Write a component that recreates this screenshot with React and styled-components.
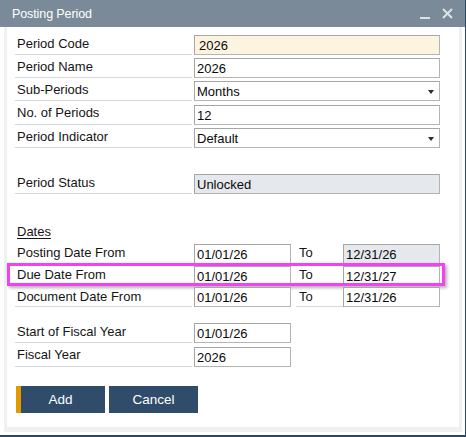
import React from "react";
import styled, { createGlobalStyle } from "styled-components";

const Global = createGlobalStyle`
  html, body { margin: 0; padding: 0; background: #ffffff; overflow: hidden; }
  * { box-sizing: border-box; }
`;

const Window = styled.div`
  width: 466px;
  height: 437px;
  background: #ffffff;
  border-right: 1px solid #2c4760;
  border-bottom: 2px solid #2c4760;
  display: flex;
  flex-direction: column;
  font-family: "Liberation Sans", Arial, sans-serif;
  position: relative;
`;

const TitleBar = styled.div`
  height: 27px;
  flex: none;
  background: #7b8a98;
  display: flex;
  align-items: center;
  justify-content: space-between;
  padding: 0 12px 0 12px;
`;

const Title = styled.div`
  color: #ffffff;
  font-size: 12.5px;
  letter-spacing: -0.1px;
`;

const TitleButtons = styled.div`
  display: flex;
  align-items: center;
  gap: 11px;
  margin-right: 0px;
`;

const Body = styled.div`
  flex: 1;
  display: flex;
  padding: 0 3px 3px 4px;
`;

const Panel = styled.div`
  flex: 1;
  border: 3px solid #f0f0f0;
  border-top: none;
  border-bottom-width: 5px;
  padding: 5px 0 0 8px;
  display: flex;
  flex-direction: column;
`;

const Row = styled.div`
  display: flex;
  height: ${(p) => p.$h}px;
  position: relative;
  flex: none;
`;

const Spacer = styled.div`
  height: ${(p) => p.$h}px;
  flex: none;
`;

const Label = styled.div`
  width: 177px;
  padding-left: 2px;
  border-bottom: ${(p) => (p.$plain ? "none" : "1px solid #d3d8dd")};
  display: flex;
  align-items: center;
  font-size: 13px;
  color: #141414;
  text-decoration: ${(p) => (p.$underline ? "underline" : "none")};
  text-underline-offset: 2px;
`;

const Field = styled.div`
  margin-left: ${(p) => (p.$flush ? 0 : 2)}px;
  align-self: flex-end;
  height: 20px;
  width: ${(p) => p.$w}px;
  border: 1px solid #b4b4b4;
  border-left-color: #a6a6a6;
  border-top-color: #a6a6a6;
  background: ${(p) => p.$bg || "#ffffff"};
  display: flex;
  align-items: center;
  justify-content: space-between;
  padding: 0 5px 0 ${(p) => p.$pad || 2}px;
  font-size: 13px;
  color: #0a0a0a;
`;

const Arrow = styled.span`
  width: 0;
  height: 0;
  border-left: 3.5px solid transparent;
  border-right: 3.5px solid transparent;
  border-top: 4px solid #2a2a2a;
  margin-top: 2px;
`;

const ToCell = styled.div`
  margin-left: 5px;
  width: 47px;
  border-bottom: 1px solid #d3d8dd;
  display: flex;
  align-items: center;
  padding-left: 3px;
  font-size: 13px;
  color: #141414;
`;

const Highlight = styled.div`
  position: absolute;
  left: -8px;
  top: -1px;
  width: 438px;
  height: 23px;
  border: 3px solid #f540f5;
  box-shadow: 2px 2px 3px rgba(0, 0, 0, 0.3);
  pointer-events: none;
`;

const ButtonRow = styled.div`
  display: flex;
  gap: 4px;
  margin: 19px 0 0 1px;
`;

const Button = styled.button`
  width: 89px;
  height: 27px;
  border: none;
  border-radius: 0;
  background: #2f4d6b;
  box-shadow: ${(p) => (p.$primary ? "inset 5px 0 0 #e19a00" : "none")};
  color: #ffffff;
  font-family: "Liberation Sans", Arial, sans-serif;
  font-size: 13.5px;
  padding: 0;
  cursor: pointer;
`;

const FULL = 246;
const DATE = 97;

function FieldRow({ label, h = 23, children }) {
  return (
    <Row $h={h}>
      <Label>{label}</Label>
      {children}
    </Row>
  );
}

function DateRow({ label, from, to, toBg, h = 22, highlight }) {
  return (
    <Row $h={h}>
      <Label>{label}</Label>
      <Field $w={DATE}>{from}</Field>
      <ToCell>To</ToCell>
      <Field $w={DATE} $flush $bg={toBg}>
        {to}
      </Field>
      {highlight && <Highlight />}
    </Row>
  );
}

export default function App() {
  return (
    <>
      <Global />
      <Window>
        <TitleBar>
          <Title>Posting Period</Title>
          <TitleButtons>
            <svg width="11" height="12" viewBox="0 0 11 12">
              <rect x="0" y="9" width="10" height="2" fill="#dde2e7" />
            </svg>
            <svg width="11" height="11" viewBox="0 0 11 11">
              <path d="M1 1 L10 10 M10 1 L1 10" stroke="#dde2e7" strokeWidth="2" fill="none" />
            </svg>
          </TitleButtons>
        </TitleBar>
        <Body>
          <Panel>
            <FieldRow label="Period Code">
              <Field $w={FULL} $bg="#fdf4df" $pad={4}>2026</Field>
            </FieldRow>
            <FieldRow label="Period Name">
              <Field $w={FULL}>2026</Field>
            </FieldRow>
            <FieldRow label="Sub-Periods">
              <Field $w={FULL}>
                Months
                <Arrow />
              </Field>
            </FieldRow>
            <FieldRow label="No. of Periods" h={24}>
              <Field $w={FULL}>12</Field>
            </FieldRow>
            <FieldRow label="Period Indicator">
              <Field $w={FULL}>
                Default
                <Arrow />
              </Field>
            </FieldRow>
            <Spacer $h={23} />
            <FieldRow label="Period Status">
              <Field $w={FULL} $bg="#e5e9ed">Unlocked</Field>
            </FieldRow>
            <Spacer $h={26} />
            <Row $h={22}>
              <Label $plain $underline>Dates</Label>
            </Row>
            <DateRow label="Posting Date From" from="01/01/26" to="12/31/26" toBg="#e5e9ed" />
            <DateRow label="Due Date From" from="01/01/26" to="12/31/27" highlight />
            <DateRow label="Document Date From" from="01/01/26" to="12/31/26" h={21} />
            <Spacer $h={13} />
            <FieldRow label="Start of Fiscal Year">
              <Field $w={DATE}>01/01/26</Field>
            </FieldRow>
            <FieldRow label="Fiscal Year" h={24}>
              <Field $w={DATE}>2026</Field>
            </FieldRow>
            <ButtonRow>
              <Button $primary>Add</Button>
              <Button>Cancel</Button>
            </ButtonRow>
          </Panel>
        </Body>
      </Window>
    </>
  );
}
